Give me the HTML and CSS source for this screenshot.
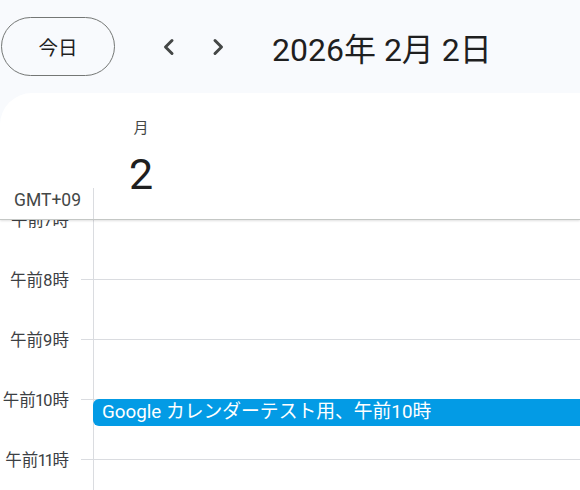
FILE: index.html
```html
<!DOCTYPE html>
<html lang="ja">
<head>
<meta charset="utf-8">
<title>Calendar</title>
<link rel="stylesheet" href="styles.css">
</head>
<body>
<div class="topbar">
  <button class="today">今日</button>
  <button class="nav nav-prev" aria-label="前">
    <svg width="14" height="18" viewBox="0 0 14 18"><path d="M10 2.5 L3.5 9 L10 15.5" fill="none" stroke="#444746" stroke-width="3" stroke-linecap="round" stroke-linejoin="round"/></svg>
  </button>
  <button class="nav nav-next" aria-label="次">
    <svg width="14" height="18" viewBox="0 0 14 18"><path d="M4 2.5 L10.5 9 L4 15.5" fill="none" stroke="#444746" stroke-width="3" stroke-linecap="round" stroke-linejoin="round"/></svg>
  </button>
  <div class="title">2026年 2月 2日</div>
</div>
<div class="panel">
  <div class="dayhead">
    <div class="gutter-head"><span class="tz">GMT+09</span></div>
    <div class="daycol">
      <div class="daybox">
        <div class="dow">月</div>
        <div class="dnum">2</div>
      </div>
    </div>
  </div>
  <div class="grid">
    <div class="row first">
      <div class="label">午前7時</div><div class="tick"></div><div class="cell"></div>
    </div>
    <div class="row">
      <div class="label">午前8時</div><div class="tick"></div><div class="cell"></div>
    </div>
    <div class="row">
      <div class="label">午前9時</div><div class="tick"></div><div class="cell"></div>
    </div>
    <div class="row">
      <div class="label">午前10時</div><div class="tick"></div>
      <div class="cell">
        <div class="event">Google カレンダーテスト用、午前10時</div>
      </div>
    </div>
    <div class="row">
      <div class="label">午前11時</div><div class="tick"></div><div class="cell"></div>
    </div>
  </div>
</div>
</body>
</html>
```
FILE: styles.css
```css
* { box-sizing: border-box; }
html, body { margin: 0; padding: 0; }
body {
  width: 580px;
  height: 490px;
  overflow: hidden;
  background: #f8fafd;
  font-family: Roboto, "Noto Sans CJK JP", sans-serif;
  color: #1f1f1f;
  display: flex;
  flex-direction: column;
}
.topbar {
  height: 93px;
  flex: none;
  display: flex;
  align-items: center;
}
.today {
  margin-left: 1px;
  width: 114px;
  height: 59px;
  border: 1px solid #747775;
  border-radius: 30px;
  background: transparent;
  font-family: Roboto, "Noto Sans CJK JP", sans-serif;
  font-size: 19.5px;
  color: #1f1f1f;
  padding: 0;
}
.nav {
  width: 40px;
  height: 40px;
  border: none;
  background: transparent;
  padding: 0;
  display: flex;
  align-items: center;
  justify-content: center;
}
.nav-prev { margin-left: 34px; }
.nav-next { margin-left: 9px; }
.title {
  margin-left: 34px;
  font-size: 32px;
  color: #1f1f1f;
  white-space: nowrap;
}
.panel {
  flex: 1;
  background: #fff;
  border-top-left-radius: 32px;
  display: flex;
  flex-direction: column;
  overflow: hidden;
}
.dayhead {
  height: 127px;
  flex: none;
  display: flex;
  border-bottom: 1px solid #c4c7c5;
  box-shadow: 0 1px 2px rgba(0,0,0,0.12);
  position: relative;
  z-index: 1;
}
.gutter-head {
  width: 93px;
  flex: none;
  display: flex;
  align-items: flex-end;
  padding-left: 14px;
  padding-bottom: 9px;
}
.tz {
  font-size: 17.5px;
  line-height: 20px;
  color: #444746;
}
.daycol {
  flex: 1;
  background: linear-gradient(#dadce0, #dadce0) left bottom / 1px 31px no-repeat;
}
.daybox {
  width: 40px;
  margin-left: 28px;
  padding-top: 25px;
  display: flex;
  flex-direction: column;
  align-items: center;
}
.dow {
  font-size: 15px;
  line-height: 20px;
  color: #444746;
}
.dnum {
  margin-top: 15px;
  font-size: 43px;
  line-height: 43px;
  color: #1f1f1f;
}
.grid {
  flex: 1;
  overflow: hidden;
}
.row {
  height: 60px;
  display: flex;
}
.row.first { margin-top: -1px; }
.label {
  width: 81px;
  flex: none;
  align-self: flex-start;
  margin-top: -8px;
  padding-right: 12px;
  text-align: right;
  font-size: 16.5px;
  line-height: 20px;
  color: #3c4043;
  white-space: nowrap;
  font-variant-numeric: proportional-nums;
}
.tick {
  width: 12px;
  flex: none;
  border-top: 1px solid #dadce0;
}
.cell {
  flex: 1;
  border-top: 1px solid #dadce0;
  border-left: 1px solid #dadce0;
  position: relative;
}
.event {
  position: absolute;
  top: -1px;
  left: -1px;
  right: -12px;
  height: 27px;
  background: #039be5;
  border-radius: 6px;
  color: #fff;
  font-size: 18.8px;
  line-height: 27px;
  padding-left: 9px;
  white-space: nowrap;
}
```
